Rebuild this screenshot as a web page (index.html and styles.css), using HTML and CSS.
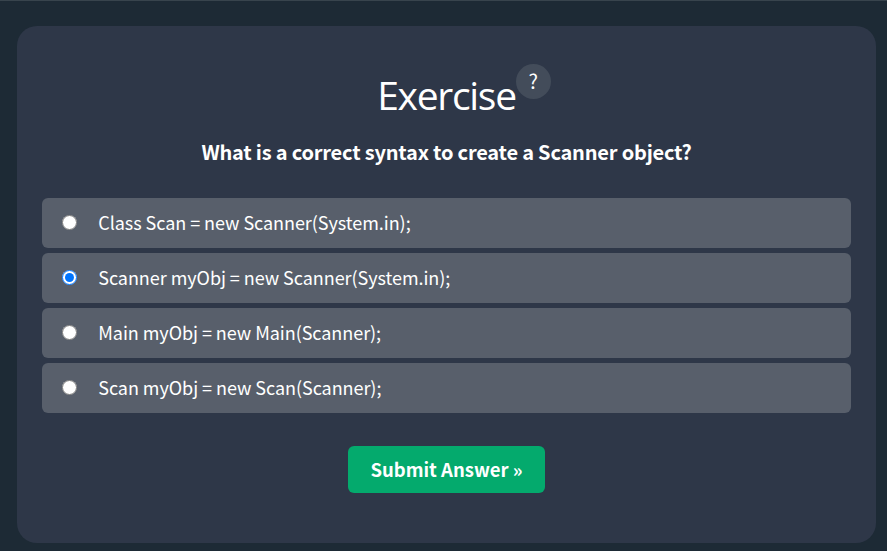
FILE: index.html
```html
<!DOCTYPE html>
<html lang="en">
<head>
<meta charset="utf-8">
<title>Exercise</title>
<link rel="stylesheet" href="styles.css">
</head>
<body>
<main class="card">
  <h2 class="title"><span class="title-text">Exercise</span><span class="help">?</span></h2>
  <p class="question">What is a correct syntax to create a Scanner object?</p>
  <form class="quiz">
    <label class="option"><input class="radio" type="radio" name="answer"><span>Class Scan = new Scanner(System.in);</span></label>
    <label class="option"><input class="radio" type="radio" name="answer" checked><span>Scanner myObj = new Scanner(System.in);</span></label>
    <label class="option"><input class="radio" type="radio" name="answer"><span>Main myObj = new Main(Scanner);</span></label>
    <label class="option"><input class="radio" type="radio" name="answer"><span>Scan myObj = new Scan(Scanner);</span></label>
    <button class="submit" type="button">Submit Answer »</button>
  </form>
</main>
</body>
</html>
```
FILE: styles.css
```css
* { box-sizing: border-box; }

body {
  margin: 0;
  height: 551px;
  padding: 25px 11px 8px 17px;
  border-top: 1px solid #38444d;
  background: #1d2a35;
  color: #fff;
  font-family: "Noto Sans CJK SC", "Noto Sans", sans-serif;
  overflow: hidden;
}

.card {
  height: 517px;
  padding: 38px 25px 0;
  border-radius: 20px;
  background: #2e3748;
}

.title {
  display: flex;
  justify-content: center;
  height: 64px;
  margin: 0;
  padding-left: 35px;
  font-weight: 400;
}

.title-text {
  padding-top: 1px;
  font: 400 39px/60px "Open Sans", sans-serif;
  letter-spacing: -1.3px;
}

.help {
  width: 35px;
  height: 35px;
  border-radius: 50%;
  background: #434c5a;
  font-size: 20px;
  line-height: 33px;
  text-align: center;
}

.question {
  height: 50px;
  margin: 0 0 20px;
  font-size: 20px;
  font-weight: 700;
  line-height: 48px;
  letter-spacing: -0.2px;
  text-align: center;
  white-space: nowrap;
}

.quiz {
  display: flex;
  flex-direction: column;
  gap: 5px;
}

.option {
  display: flex;
  align-items: center;
  height: 50px;
  padding: 0 0 2px 20px;
  border-radius: 6px;
  background: #585f6b;
  font-size: 18px;
  letter-spacing: -0.05px;
  white-space: nowrap;
}

.radio {
  width: 15px;
  height: 15px;
  margin: 0 21.25px 0 0;
}

.submit {
  align-self: center;
  width: 197px;
  height: 47px;
  margin-top: 28px;
  padding: 0;
  border: 0;
  border-radius: 6px;
  background: #04aa6d;
  color: #fff;
  font: 700 18.5px/47px "Noto Sans CJK SC", "Noto Sans", sans-serif;
}
```
